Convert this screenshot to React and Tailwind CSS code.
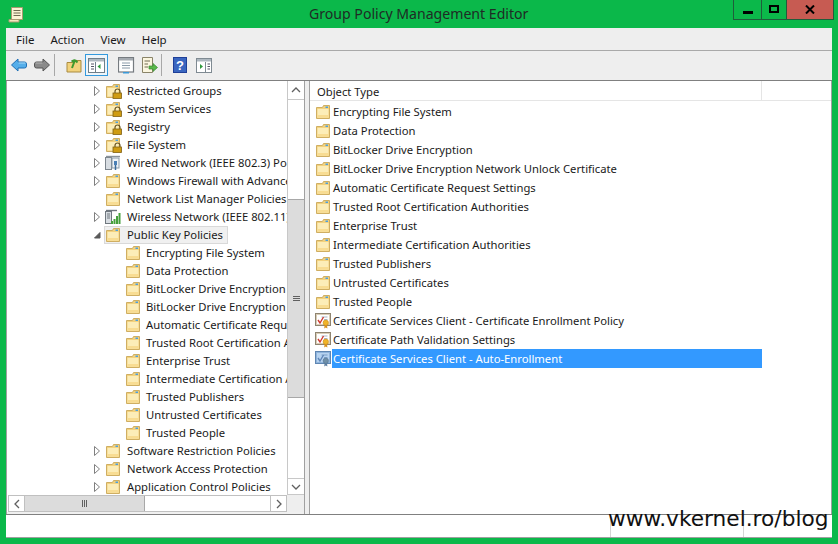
import React from "react";

const F = "[font-family:'Noto_Sans',sans-serif]";

function Folder() {
  return (
    <svg width="16" height="16" viewBox="0 0 16 16" className="shrink-0">
      <path d="M1.5 3.5V14.5H14.5V1.5H8.5L7.5 3.5H1.5Z" fill="#f3d27e" stroke="#cfae62" />
      <path d="M2.5 5H13.5V13.5H2.5Z" fill="#fcedb8" />
      <path d="M2.5 11H13.5V13.5H2.5Z" fill="#f8dc92" />
      <rect x="10.5" y="2.5" width="2.5" height="1.5" fill="#4a9fe0" />
    </svg>
  );
}

function LockFolder() {
  return (
    <svg width="17" height="16" viewBox="0 0 17 16" className="-mr-px shrink-0">
      <path d="M1.5 3.5V14.5H14.5V1.5H8.5L7.5 3.5H1.5Z" fill="#f3d27e" stroke="#cfae62" />
      <path d="M2.5 5H13.5V13.5H2.5Z" fill="#fcedb8" />
      <rect x="10.5" y="2.5" width="2.5" height="1.5" fill="#4a9fe0" />
      <path d="M10 10V8.5a2.5 2.5 0 0 1 5 0V10" fill="none" stroke="#6a5520" strokeWidth="1.2" />
      <rect x="8" y="10" width="8.5" height="5.5" fill="#cf9c12" stroke="#7f6012" strokeWidth="0.8" />
    </svg>
  );
}

function Wired() {
  return (
    <svg width="16" height="16" viewBox="0 0 16 16" className="shrink-0">
      <rect x="0.5" y="2.5" width="6" height="12" fill="#d8dde2" stroke="#7d858d" />
      <path d="M1 1.5H15" stroke="#8a929a" strokeWidth="1.4" />
      <rect x="7" y="3" width="7" height="10" fill="#eef2f6" stroke="#8a9aa8" />
      <path d="M9 6H12V10H9Z" fill="#4a7fb5" />
      <path d="M10.5 10V15" stroke="#3a6a9a" strokeWidth="1.5" />
    </svg>
  );
}

function Wireless() {
  return (
    <svg width="16" height="16" viewBox="0 0 16 16" className="shrink-0">
      <rect x="0.5" y="2.5" width="6" height="12" fill="#d8dde2" stroke="#70787f" />
      <path d="M1 1.5H12" stroke="#70787f" strokeWidth="1.4" />
      <path d="M2 5H5M2 7H5M2 9H5" stroke="#70787f" />
      <rect x="6" y="12" width="2" height="3" fill="#46a03c" />
      <rect x="8.5" y="10" width="2" height="5" fill="#46a03c" />
      <rect x="11" y="7" width="2" height="8" fill="#46a03c" />
      <rect x="13.5" y="4" width="2" height="11" fill="#46a03c" />
    </svg>
  );
}

function Cert({ selected }) {
  return (
    <svg width="16" height="16" viewBox="0 0 16 16" className="shrink-0">
      <rect x="0.5" y="0.5" width="15" height="12" fill={selected ? "#8fb4dc" : "#d9cdb6"} stroke={selected ? "#5f86b2" : "#8f8470"} />
      <rect x="2" y="2" width="12" height="9" fill={selected ? "#b7d3f0" : "#ffffff"} />
      <path d="M6.5 4H12.5M9 6.5H12.5" stroke={selected ? "#7a9fc8" : "#a9b7c6"} />
      <path d="M3 7L5 10L8.5 4" fill="none" stroke={selected ? "#5f86b8" : "#cf3a30"} strokeWidth="1.4" />
      <circle cx="10.8" cy="9.8" r="2.7" fill={selected ? "#6f8fa8" : "#f0b428"} stroke={selected ? "#557592" : "#c98a18"} strokeWidth="0.6" />
      <path d="M9.6 12L9.2 15.5L10.8 14.5L12.4 15.5L12 12Z" fill={selected ? "#5f7f9f" : "#d6901c"} />
    </svg>
  );
}

function Expander() {
  return (
    <svg width="8" height="10" viewBox="0 0 8 10" className="shrink-0">
      <path d="M1.5 0.5L6.5 5L1.5 9.5Z" fill="#fff" stroke="#808080" />
    </svg>
  );
}

function Collapser() {
  return (
    <svg width="8" height="10" viewBox="0 0 8 10" className="shrink-0">
      <path d="M7 2.5V8H1.5Z" fill="#595959" stroke="#595959" />
    </svg>
  );
}

function Chevron({ dir }) {
  const d = {
    up: "M1 6L5 2L9 6",
    down: "M1 2L5 6L9 2",
    left: "M6 1L2 5L6 9",
    right: "M2 1L6 5L2 9",
  }[dir];
  const vertical = dir === "up" || dir === "down";
  return (
    <svg width={vertical ? 10 : 8} height={vertical ? 8 : 10} viewBox={vertical ? "0 0 10 8" : "0 0 8 10"}>
      <path d={d} fill="none" stroke="#606060" strokeWidth="1.3" />
    </svg>
  );
}

function TreeRow({ label, level = 0, icon = "folder", arrow = "none", selected }) {
  const Icon = { folder: Folder, lock: LockFolder, wired: Wired, wireless: Wireless }[icon];
  return (
    <div className={`flex h-[18px] items-center ${level === 1 ? "pl-[117px]" : "pl-[85px]"}`}>
      {level === 0 && (
        <div className="flex w-[12px] shrink-0 items-center">
          {arrow === "closed" && <Expander />}
          {arrow === "open" && <Collapser />}
        </div>
      )}
      <div
        className={`flex h-[18px] shrink-0 items-center ${level === 1 ? "gap-[5px]" : "gap-[6px]"} ${
          selected ? "-ml-px w-[124px] border border-[#d9d9d9] bg-[#f0f0f0]" : ""
        }`}
      >
        <Icon />
        <span className="whitespace-nowrap text-[11.25px] leading-[18px] text-[#1a1a1a]">{label}</span>
      </div>
    </div>
  );
}

const tree = [
  { label: "Restricted Groups", icon: "lock", arrow: "closed" },
  { label: "System Services", icon: "lock", arrow: "closed" },
  { label: "Registry", icon: "lock", arrow: "closed" },
  { label: "File System", icon: "lock", arrow: "closed" },
  { label: "Wired Network (IEEE 802.3) Policies", icon: "wired", arrow: "closed" },
  { label: "Windows Firewall with Advanced Security", arrow: "closed" },
  { label: "Network List Manager Policies" },
  { label: "Wireless Network (IEEE 802.11) Policies", icon: "wireless", arrow: "closed" },
  { label: "Public Key Policies", arrow: "open", selected: true },
  { label: "Encrypting File System", level: 1 },
  { label: "Data Protection", level: 1 },
  { label: "BitLocker Drive Encryption", level: 1 },
  { label: "BitLocker Drive Encryption Network", level: 1 },
  { label: "Automatic Certificate Request Settings", level: 1 },
  { label: "Trusted Root Certification Authorities", level: 1 },
  { label: "Enterprise Trust", level: 1 },
  { label: "Intermediate Certification Authorities", level: 1 },
  { label: "Trusted Publishers", level: 1 },
  { label: "Untrusted Certificates", level: 1 },
  { label: "Trusted People", level: 1 },
  { label: "Software Restriction Policies", arrow: "closed" },
  { label: "Network Access Protection", arrow: "closed" },
  { label: "Application Control Policies", arrow: "closed" },
];

const list = [
  { label: "Encrypting File System" },
  { label: "Data Protection" },
  { label: "BitLocker Drive Encryption" },
  { label: "BitLocker Drive Encryption Network Unlock Certificate" },
  { label: "Automatic Certificate Request Settings" },
  { label: "Trusted Root Certification Authorities" },
  { label: "Enterprise Trust" },
  { label: "Intermediate Certification Authorities" },
  { label: "Trusted Publishers" },
  { label: "Untrusted Certificates" },
  { label: "Trusted People" },
  { label: "Certificate Services Client - Certificate Enrollment Policy", cert: true },
  { label: "Certificate Path Validation Settings", cert: true },
  { label: "Certificate Services Client - Auto-Enrollment", cert: true, selected: true },
];

function ToolbarIcons() {
  return (
    <div className="flex h-[29px] items-center bg-[#eeeeee] pb-px pl-[5px]">
      <svg width="16" height="16" viewBox="0 0 16 16">
        <path d="M0.5 8L7 2V5H13.5Q15.5 5 15.5 7V9Q15.5 11 13.5 11H7V14Z" fill="#55aeea" stroke="#1f6fb5" />
        <path d="M7.5 6H14.5" stroke="#a6d8f6" />
      </svg>
      <svg width="16" height="16" viewBox="0 0 16 16" className="ml-[7px]">
        <path d="M15.5 8L9 2V5H2.5Q0.5 5 0.5 7V9Q0.5 11 2.5 11H9V14Z" fill="#8a8a8a" stroke="#555" />
        <path d="M1.5 6H8.5" stroke="#b5b5b5" />
      </svg>
      <div className="ml-[4px] h-[22px] w-px bg-[#a8a8a8]" />
      <svg width="16" height="16" viewBox="0 0 16 16" className="ml-[11px]">
        <path d="M1 5.5V15H15V3.5H9L8 5.5Z" fill="#f2d27c" stroke="#a98b40" />
        <path d="M6 11L9 3M9 3L5.5 4.5M9 3L11.5 5.5" fill="none" stroke="#3f9a2e" strokeWidth="2" />
      </svg>
      <div className="ml-[3px] flex h-[22px] w-[23px] items-center justify-center border border-[#3399dd] bg-[#eef5fa]">
        <svg width="17" height="15" viewBox="0 0 17 15">
          <rect x="0.5" y="0.5" width="16" height="14" fill="#fff" stroke="#6f7f8a" />
          <rect x="1" y="1" width="15" height="2.5" fill="#aeb8c0" />
          <path d="M3 6H6M3 8.5H6M3 11H6" stroke="#556" />
          <path d="M7.5 4V14" stroke="#6f7f8a" />
          <path d="M12.5 6V11L9.5 8.5Z" fill="#2f9a3c" />
        </svg>
      </div>
      <svg width="17" height="17" viewBox="0 0 17 17" className="ml-[10px]">
        <rect x="0.5" y="0.5" width="15" height="14.5" fill="#fff" stroke="#767b80" strokeWidth="1.2" />
        <rect x="1" y="1" width="14" height="2.5" fill="#a4aab0" />
        <path d="M4 6H12M4 8.5H12M4 11H12" stroke="#8a9aa8" />
        <rect x="5" y="15" width="6" height="1.5" fill="#3a9ad9" />
      </svg>
      <svg width="17" height="17" viewBox="0 0 17 17" className="ml-[6px]">
        <path d="M1.5 0.5H11.5V15.5H1.5Z" fill="#fbf6e0" stroke="#8a8468" />
        <path d="M3.5 4H9M3.5 7H7M3.5 10H7" stroke="#706a50" />
        <path d="M8 9H12V6.5L16.5 10.5L12 14.5V12H8Z" fill="#5ab84a" stroke="#3a8a30" strokeWidth="0.7" />
      </svg>
      <div className="ml-[3px] h-[22px] w-px bg-[#a8a8a8]" />
      <svg width="14" height="16" viewBox="0 0 14 16" className="ml-[11px]">
        <rect x="0" y="0" width="14" height="16" fill="#1f3f98" />
        <rect x="1" y="1" width="12" height="14" fill="#3a66c0" />
        <text x="7" y="13" textAnchor="middle" fontSize="13" fontWeight="700" fill="#fff" fontFamily="Liberation Sans">?</text>
      </svg>
      <svg width="16" height="15" viewBox="0 0 16 15" className="ml-[9px]">
        <rect x="0.5" y="0.5" width="15" height="14" fill="#fff" stroke="#7f8a92" />
        <rect x="1" y="1" width="14" height="2.5" fill="#aeb8c0" />
        <path d="M9.5 4V14" stroke="#7f8a92" />
        <path d="M11.5 6H14M11.5 8.5H14M11.5 11H14" stroke="#556" />
        <path d="M4 6V11L7 8.5Z" fill="#2f9a3c" />
      </svg>
    </div>
  );
}

export default function App() {
  return (
    <div className={`${F} relative flex h-[544px] w-[838px] flex-col overflow-hidden bg-[#0bb84a] text-[#1a1a1a]`}>
      <div className="flex h-[28px] shrink-0 items-start justify-between">
        <div className="flex items-center pl-[8px] pt-[6px]">
          <svg width="16" height="17" viewBox="0 0 16 17">
            <path d="M3.5 1.5H14.5V13.5H3.5Z" fill="#fbf3d4" stroke="#a89a70" />
            <path d="M1 13.5H11V16H1Z" fill="#f3e8c0" stroke="#a89a70" />
            <path d="M5.5 4.5H12.5M5.5 7H12.5M5.5 9.5H12.5" stroke="#706a50" />
          </svg>
        </div>
        <div className="mr-[4px] flex h-[20px] border-x border-b border-[#1f5d3b]">
          <div className="flex w-[27px] items-end justify-center pb-[5px]">
            <div className="h-[3px] w-[10px] bg-black" />
          </div>
          <div className="flex w-[26px] items-start justify-center border-x border-[#1f5d3b] pt-[5px]">
            <div className="h-[8px] w-[10px] border-2 border-black" />
          </div>
          <div className="flex w-[46px] items-center justify-center bg-[#c75b52] pb-[1px]">
            <svg width="10" height="9" viewBox="0 0 10 9">
              <path d="M1 0.5L9 8.5M9 0.5L1 8.5" stroke="#000" strokeWidth="2" />
            </svg>
          </div>
        </div>
      </div>
      <div className="absolute left-[309px] top-[4px] whitespace-nowrap text-[14.1px] leading-[20px] text-[#1f2b25]">
        Group Policy Management Editor
      </div>

      <div className="mx-[6px] mb-[6px] flex min-h-0 flex-1 flex-col border-b border-[#a0a0a0] bg-[#eeeeee]">
        <div className="flex h-[23px] shrink-0 items-center gap-[16px] border-b border-[#a9a9a9] pl-[10px] pt-[2px] text-[11.5px]">
          <span>File</span>
          <span>Action</span>
          <span>View</span>
          <span>Help</span>
        </div>
        <ToolbarIcons />

        <div className="flex min-h-0 flex-1 border-y border-[#808080]">
          {/* Left pane */}
          <div className="flex w-[299px] shrink-0 flex-col border-x border-[#a0a0a0] bg-[#f0f0f0] pb-[2px]">
            <div className="flex min-h-0 flex-1 flex-col">
              <div className="flex min-h-0 flex-1">
                <div className="min-w-0 flex-1 overflow-hidden bg-white pl-px pt-px">
                  {tree.map((r) => (
                    <TreeRow key={r.label} {...r} />
                  ))}
                </div>
                <div className="flex w-[17px] shrink-0 flex-col border-l border-[#c8c8c8] bg-white">
                  <div className="flex h-[19px] shrink-0 items-center justify-center border-b border-[#c8c8c8]">
                    <Chevron dir="up" />
                  </div>
                  <div className="h-[99px] shrink-0" />
                  <div className="flex h-[199px] shrink-0 items-center justify-center border-y border-[#a8a8a8] bg-[#dcdcdc]">
                    <div className="flex flex-col gap-px">
                      <div className="h-px w-[7px] bg-[#606060]" />
                      <div className="h-px w-[7px] bg-[#606060]" />
                      <div className="h-px w-[7px] bg-[#606060]" />
                    </div>
                  </div>
                  <div className="flex-1" />
                  <div className="flex h-[17px] shrink-0 items-center justify-center border-y border-[#c8c8c8]">
                    <Chevron dir="down" />
                  </div>
                </div>
              </div>
              <div className="flex h-[17px] shrink-0 bg-white pl-px">
                <div className="flex min-w-0 flex-1 border-y border-[#c0c0c0] bg-white">
                  <div className="flex w-[17px] items-center justify-center border-x border-[#c0c0c0]">
                    <Chevron dir="left" />
                  </div>
                  <div className="flex w-[120px] items-center justify-center border-r border-[#a8a8a8] bg-[#dcdcdc]">
                    <div className="flex gap-px">
                      <div className="h-[7px] w-px bg-[#606060]" />
                      <div className="h-[7px] w-px bg-[#606060]" />
                      <div className="h-[7px] w-px bg-[#606060]" />
                    </div>
                  </div>
                  <div className="flex-1" />
                  <div className="flex w-[17px] items-center justify-center border-x border-[#c0c0c0]">
                    <Chevron dir="right" />
                  </div>
                </div>
                <div className="w-[17px] shrink-0 bg-[#eeeeee]" />
              </div>
            </div>
          </div>
          <div className="w-[4px] shrink-0 bg-[#eeeeee]" />
          {/* Right pane */}
          <div className="min-w-0 flex-1 border-x border-[#a0a0a0] bg-white">
            <div className="flex h-[20px] border-b border-[#e5e5e5]">
              <div className="flex w-[452px] items-center border-r border-[#e5e5e5] pl-[7px] pt-[3px] text-[11.25px]">Object Type</div>
            </div>
            <div className="pt-px">
              {list.map((r) => (
                <div key={r.label} className="flex h-[19px] items-center pl-[5px]">
                  {r.cert ? <Cert selected={r.selected} /> : <Folder />}
                  <div
                    className={`ml-px h-[19px] pl-[1px] text-[11.25px] leading-[19px] whitespace-nowrap ${
                      r.selected ? "w-[430px] bg-[#3399ff] text-white" : "text-[#1a1a1a]"
                    }`}
                  >
                    {r.label}
                  </div>
                </div>
              ))}
            </div>
          </div>
        </div>

        <div className="flex h-[22px] shrink-0 bg-white">
          <div className="w-[605px] border-r border-[#d5d5d5]" />
          <div className="w-[133px] border-r border-[#d5d5d5]" />
        </div>
      </div>

      <div className="absolute left-[608px] top-[505px] whitespace-nowrap text-[21.7px] leading-[28px] text-[#111] [font-family:'DejaVu_Sans',sans-serif]">
        www.vkernel.ro/blog
      </div>
    </div>
  );
}
